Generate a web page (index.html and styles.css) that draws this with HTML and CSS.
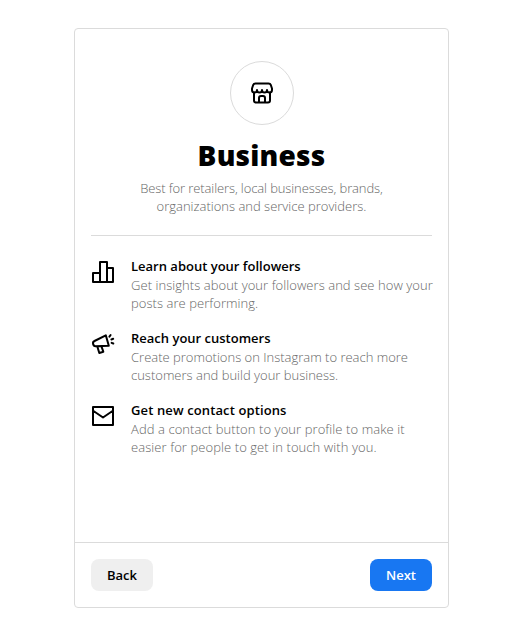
FILE: index.html
```html
<!DOCTYPE html>
<html lang="en">
<head>
<meta charset="utf-8">
<title>Business</title>
<link rel="stylesheet" href="styles.css">
</head>
<body>
<main class="card">
  <div class="content">
    <header class="intro">
      <div class="badge">
        <svg class="store" viewBox="0 0 24 24">
          <path d="M4 11.500V19.500a2 2 0 0 0 2 2h12a2 2 0 0 0 2-2v-8M9 21.500v-4.500a2 2 0 0 1 2-2h2a2 2 0 0 1 2 2v4.500"/>
          <path d="M5.500 2.500h13c1.200 0 2 .6 2.400 1.700L22 7.500V9a2.500 2.500 0 0 1-5 0 2.500 2.500 0 0 1-5 0 2.500 2.500 0 0 1-5 0A2.500 2.500 0 0 1 2 9V7.500L3.100 4.200C3.500 3.100 4.300 2.500 5.500 2.500ZM7 9v.8M12 9v.8M17 9v.8"/>
        </svg>
      </div>
      <h1>Business</h1>
      <p><span class="tight">Best for retailers, local businesses, brands,</span><br>organizations and service providers.</p>
    </header>
    <ul class="features">
      <li>
        <svg class="icon" viewBox="0 0 24 24"><path d="M2 13h7v9H2zM9 2h7v20H9zM16 8h6v14h-6z"/></svg>
        <div><h2>Learn about your followers</h2><p class="wide">Get insights about your followers and see how your<br>posts are performing.</p></div>
      </li>
      <li>
        <svg class="icon" viewBox="0 0 24 24"><path d="M14.800 3.300 17.800 13.800 4.500 14.200Q2.600 14.200 2.100 12T3.500 9ZM6.300 14.500 8.300 21l4-1.300-1.800-5.200M18.400 4.600 19.600 3M20.400 7.500l1.800-.7M20.600 10.800l1.700.7"/></svg>
        <div><h2>Reach your customers</h2><p>Create promotions on Instagram to reach more<br>customers and build your business.</p></div>
      </li>
      <li>
        <svg class="icon" viewBox="0 0 24 24"><path d="M2 3h20v18H2zM2.500 7 12 13.500l9.500-6.500"/></svg>
        <div><h2 class="wide">Get new contact options</h2><p class="wider">Add a contact button to your profile to make it<br>easier for people to get in touch with you.</p></div>
      </li>
    </ul>
  </div>
  <footer class="actions">
    <button class="button">Back</button>
    <button class="button primary">Next</button>
  </footer>
</main>
</body>
</html>
```

FILE: styles.css
```css
* { box-sizing: border-box; }
body {
  margin: 0;
  padding: 28px 0 0 74px;
  background: #fff;
  color: #000;
  font: 13px/18px "Open Sans", "Noto Sans", sans-serif;
}
h1, h2, p, ul { margin: 0; padding: 0; }
.card {
  display: flex;
  flex-direction: column;
  width: 375px;
  height: 580px;
  border: 1px solid #dbdbdb;
  border-radius: 4px;
}
.content { flex: 1; padding: 32px 16px 0; }
.intro {
  display: flex;
  flex-direction: column;
  align-items: center;
  height: 175px;
  border-bottom: 1px solid #dbdbdb;
  text-align: center;
}
.badge {
  display: grid;
  place-items: center;
  width: 64px;
  height: 64px;
  border: 1px solid #dbdbdb;
  border-radius: 50%;
}
svg {
  flex: none;
  fill: none;
  stroke: #000;
  stroke-width: 2;
  stroke-linejoin: round;
  stroke-linecap: round;
}
.store { width: 24px; height: 24px; }
h1 {
  margin: 12px 0 6px;
  font-size: 28px;
  line-height: 36px;
  letter-spacing: 0.2px;
  font-weight: 800;
}
p { color: #666; font-weight: 300; white-space: nowrap; }
.features { list-style: none; padding-top: 21px; }
.features li { display: flex; gap: 16px; height: 72px; }
.icon { width: 24px; height: 24px; margin-top: 3px; }
h2 { font-size: 13px; line-height: 19px; font-weight: 600; white-space: nowrap; }
.tight { letter-spacing: -0.11px; }
.wide { letter-spacing: 0.05px; }
.wider { letter-spacing: 0.08px; }
h2.wide { letter-spacing: 0.12px; }
.actions {
  display: flex;
  justify-content: space-between;
  height: 65px;
  padding: 16px;
  border-top: 1px solid #dbdbdb;
}
.button {
  width: 62px;
  height: 32px;
  padding: 0;
  border: 0;
  border-radius: 8px;
  background: #efefef;
  color: #000;
  font: 600 13px/32px "Open Sans", "Noto Sans", sans-serif;
}
.primary { background: #1877f2; color: #fff; }
```
